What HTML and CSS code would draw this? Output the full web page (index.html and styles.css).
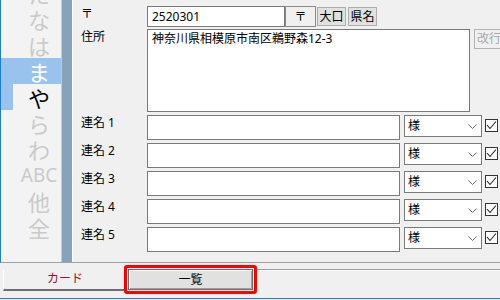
FILE: index.html
```html
<!DOCTYPE html>
<html lang="ja">
<head>
<meta charset="utf-8">
<title>住所録</title>
<link rel="stylesheet" href="styles.css">
</head>
<body>
<div class="window">
  <div class="top">
    <nav class="index">
      <div class="kana">た</div>
      <div class="kana">な</div>
      <div class="kana">は</div>
      <div class="kana active">ま</div>
      <div class="kana current">や</div>
      <div class="kana">ら</div>
      <div class="kana">わ</div>
      <div class="kana abc">ABC</div>
      <div class="kana">他</div>
      <div class="kana">全</div>
    </nav>
    <div class="splitter"></div>
    <main class="form">
      <div class="row zip-row">
        <div class="label">〒</div>
        <div class="input zip">2520301</div>
        <div class="btn zip-btn">〒</div>
        <div class="btn small">大口</div>
        <div class="btn small">県名</div>
      </div>
      <div class="row addr-row">
        <div class="label">住所</div>
        <div class="textarea">神奈川県相模原市南区鵜野森12-3</div>
        <div class="btn disabled">改行</div>
      </div>
      <div class="row contact">
        <div class="label">連名 1</div>
        <div class="input name"></div>
        <div class="select"><span>様</span><svg class="chev" width="9" height="5" viewBox="0 0 9 5"><polyline points="0.5,0.5 4.5,4.5 8.5,0.5" fill="none" stroke="#6a6a6a"/></svg></div>
        <div class="check"><svg width="11" height="11" viewBox="0 0 11 11"><polyline points="1,5 4,8.5 10,1.5" fill="none" stroke="#222" stroke-width="1.1"/></svg></div>
      </div>
      <div class="row contact">
        <div class="label">連名 2</div>
        <div class="input name"></div>
        <div class="select"><span>様</span><svg class="chev" width="9" height="5" viewBox="0 0 9 5"><polyline points="0.5,0.5 4.5,4.5 8.5,0.5" fill="none" stroke="#6a6a6a"/></svg></div>
        <div class="check"><svg width="11" height="11" viewBox="0 0 11 11"><polyline points="1,5 4,8.5 10,1.5" fill="none" stroke="#222" stroke-width="1.1"/></svg></div>
      </div>
      <div class="row contact">
        <div class="label">連名 3</div>
        <div class="input name"></div>
        <div class="select"><span>様</span><svg class="chev" width="9" height="5" viewBox="0 0 9 5"><polyline points="0.5,0.5 4.5,4.5 8.5,0.5" fill="none" stroke="#6a6a6a"/></svg></div>
        <div class="check"><svg width="11" height="11" viewBox="0 0 11 11"><polyline points="1,5 4,8.5 10,1.5" fill="none" stroke="#222" stroke-width="1.1"/></svg></div>
      </div>
      <div class="row contact">
        <div class="label">連名 4</div>
        <div class="input name"></div>
        <div class="select"><span>様</span><svg class="chev" width="9" height="5" viewBox="0 0 9 5"><polyline points="0.5,0.5 4.5,4.5 8.5,0.5" fill="none" stroke="#6a6a6a"/></svg></div>
        <div class="check"><svg width="11" height="11" viewBox="0 0 11 11"><polyline points="1,5 4,8.5 10,1.5" fill="none" stroke="#222" stroke-width="1.1"/></svg></div>
      </div>
      <div class="row contact">
        <div class="label">連名 5</div>
        <div class="input name"></div>
        <div class="select"><span>様</span><svg class="chev" width="9" height="5" viewBox="0 0 9 5"><polyline points="0.5,0.5 4.5,4.5 8.5,0.5" fill="none" stroke="#6a6a6a"/></svg></div>
        <div class="check"><svg width="11" height="11" viewBox="0 0 11 11"><polyline points="1,5 4,8.5 10,1.5" fill="none" stroke="#222" stroke-width="1.1"/></svg></div>
      </div>
    </main>
  </div>
  <div class="tabs">
    <div class="tab card">カード</div>
    <div class="focus"><div class="tab-btn">一覧</div></div>
    <div class="tab-rest"></div>
  </div>
</div>
</body>
</html>
```

FILE: styles.css
```css
* { box-sizing: border-box; margin: 0; padding: 0; }
html, body { width: 500px; height: 300px; overflow: hidden; }
body {
  background: #f0f0f0;
  font-family: "Noto Sans", "Noto Sans CJK JP", sans-serif;
  font-size: 12px;
  color: #000;
}
.window { width: 500px; height: 300px; display: flex; flex-direction: column; }

.top {
  display: flex;
  height: 263px;
  border-left: 1px solid #1e7bd6;
  border-bottom: 1px solid #a0a0a0;
}

/* kana index */
.index {
  width: 61px;
  flex: none;
  background: #f3f3f3;
  border-right: 1px solid #c9c9c9;
  overflow: hidden;
  font-family: "Noto Sans CJK JP", sans-serif;
}
.kana {
  position: relative;
  height: 26px;
  line-height: 26px;
  font-size: 22px;
  color: #cacaca;
  text-align: center;
  padding-left: 16px;
}
.kana:first-child { margin-top: -20px; }
.kana.active { background: #99c3ec; color: #fff; }
.kana.current { color: #000; }
.kana.current::before {
  content: "";
  position: absolute;
  left: 0; top: 0;
  width: 12px; height: 26px;
  background: #99c3ec;
}
.kana.abc { font-family: "Noto Sans", sans-serif; font-size: 19px; }

.splitter { width: 10px; flex: none; background: #88a2bc; }

/* form */
.form {
  flex: 1;
  min-width: 0;
  overflow: hidden;
  border-left: 1px solid #fbfbfb;
  padding: 6px 0 0 8px;
  display: flex;
  flex-direction: column;
}
.row { display: flex; align-items: flex-start; flex: none; }
.label {
  width: 66px;
  flex: none;
  line-height: 16px;
  white-space: pre;
}
.input, .textarea {
  background: #fff;
  border: 1px solid #7a7a7a;
  padding: 0 4px;
  flex: none;
}
.zip-row { height: 21px; align-items: center; }
.zip-row .label { align-self: flex-start; }
.zip { width: 138px; height: 21px; line-height: 19px; }
.btn {
  flex: none;
  display: flex;
  align-items: center;
  justify-content: center;
  border: 1px solid #adadad;
  background: #e1e1e1;
  line-height: 16px;
  white-space: nowrap;
}
.zip-btn { width: 31px; height: 21px; background: #f0f0f0; border-color: #8a8a8a; }
.small { width: 29px; height: 19px; margin-left: 1px; }
.small + .small { margin-left: 2px; }

.addr-row { margin-top: 2px; }
.textarea { width: 323px; height: 83px; padding-top: 1px; line-height: 16px; }
.btn.disabled {
  width: 34px; height: 20px;
  margin-left: 4px;
  background: #f0f0f0;
  border-color: #b4b4b4;
  color: #a8a8a8;
  justify-content: flex-start;
  padding-left: 2px;
}

.contact { margin-top: 3px; }
.name { width: 253px; height: 25px; }
.select {
  flex: none;
  width: 78px; height: 22px;
  margin-left: 4px;
  background: #fff;
  border: 1px solid #7a7a7a;
  display: flex;
  align-items: center;
  justify-content: space-between;
  padding: 0 4px 0 3px;
  line-height: 16px;
}
.chev { display: block; }
.check {
  flex: none;
  width: 13px; height: 13px;
  margin: 4px 0 0 3px;
  background: #fff;
  border: 1px solid #333;
}
.check svg { display: block; }

/* bottom tabs */
.tabs {
  height: 36px;
  flex: none;
  display: flex;
  align-items: flex-start;
  padding-left: 3px;
  border-bottom: 1px solid #1e7bd6;
}
.tab.card {
  margin-top: 6px;
  width: 121px; height: 22px;
  flex: none;
  border-left: 1px solid #fff;
  border-bottom: 2px solid #6e6e6e;
  display: flex;
  align-items: center;
  justify-content: center;
  color: #a0102a;
  line-height: 16px;
  padding-left: 2px;
}
.focus {
  margin-top: 2px;
  width: 133px; height: 29px;
  flex: none;
  border: 3px solid #ff0000;
  border-radius: 3px;
  padding: 1px;
}
.tab-btn {
  width: 100%; height: 100%;
  background: #e1e1e1;
  border: 1px solid #6e6e6e;
  box-shadow: inset 1px 1px #fbfbfb, inset -1px -1px #a0a0a0;
  display: flex;
  align-items: center;
  justify-content: center;
  line-height: 16px;
}
.tab-rest {
  flex: 1;
  margin-top: 6px;
  height: 2px;
  border-top: 1px solid #a0a0a0;
  border-bottom: 1px solid #fbfbfb;
}
```
